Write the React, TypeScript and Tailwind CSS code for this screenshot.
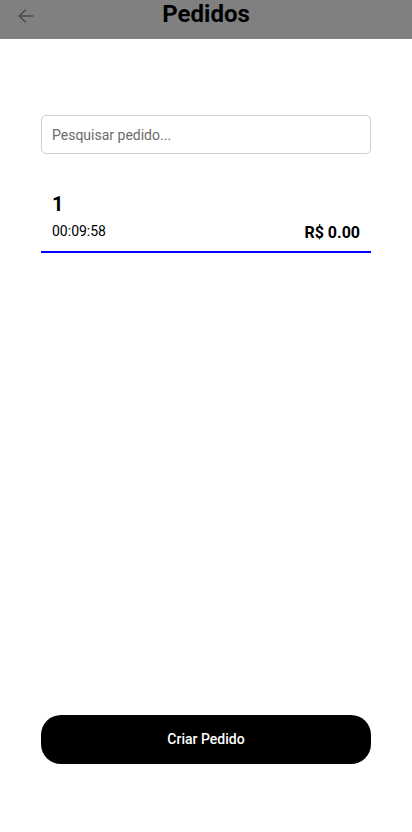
import React from 'react';

export default function App() {
  return (
    <div className="flex h-[832px] w-[412px] flex-col bg-white font-['Roboto',sans-serif]">
      <header className="relative flex h-[39px] items-center justify-center bg-[#808080]">
        <button className="absolute left-[12px] top-[2px] p-1 text-[#4a4a55]">
          <svg width="20" height="20" viewBox="0 0 24 24" fill="none" stroke="currentColor" strokeWidth="1.8" strokeLinecap="round" strokeLinejoin="round">
            <path d="M20 12H4" />
            <path d="M11 5l-7 7 7 7" />
          </svg>
        </button>
        <h1 className="-mt-[11px] text-[24px] font-bold text-black">Pedidos</h1>
      </header>

      <main className="flex flex-1 flex-col px-[41px] pt-[76px]">
        <input
          className="h-[39px] w-full rounded-[5px] border border-[#cfcfcf] px-[10px] text-[14px] placeholder:text-[#6b6b6b] outline-none"
          placeholder="Pesquisar pedido..."
        />

        <div className="mt-[37px] flex flex-col px-[11px] pb-[8px]">
          <span className="text-[20px] font-bold leading-[26px] text-black">1</span>
          <div className="mt-[3px] flex items-start justify-between">
            <span className="mt-[2px] text-[14px] leading-[18px] text-black">00:09:58</span>
            <span className="mt-[3px] text-[16px] font-bold leading-[20px] text-black">R$ 0.00</span>
          </div>
        </div>
        <div className="h-[1.5px] w-full bg-[#0000ff]" />
      </main>

      <div className="px-[41px] pb-[68px]">
        <button className="flex h-[49px] w-full items-center justify-center rounded-[20px] bg-black text-[14px] font-medium text-white">
          Criar Pedido
        </button>
      </div>
    </div>
  );
}
